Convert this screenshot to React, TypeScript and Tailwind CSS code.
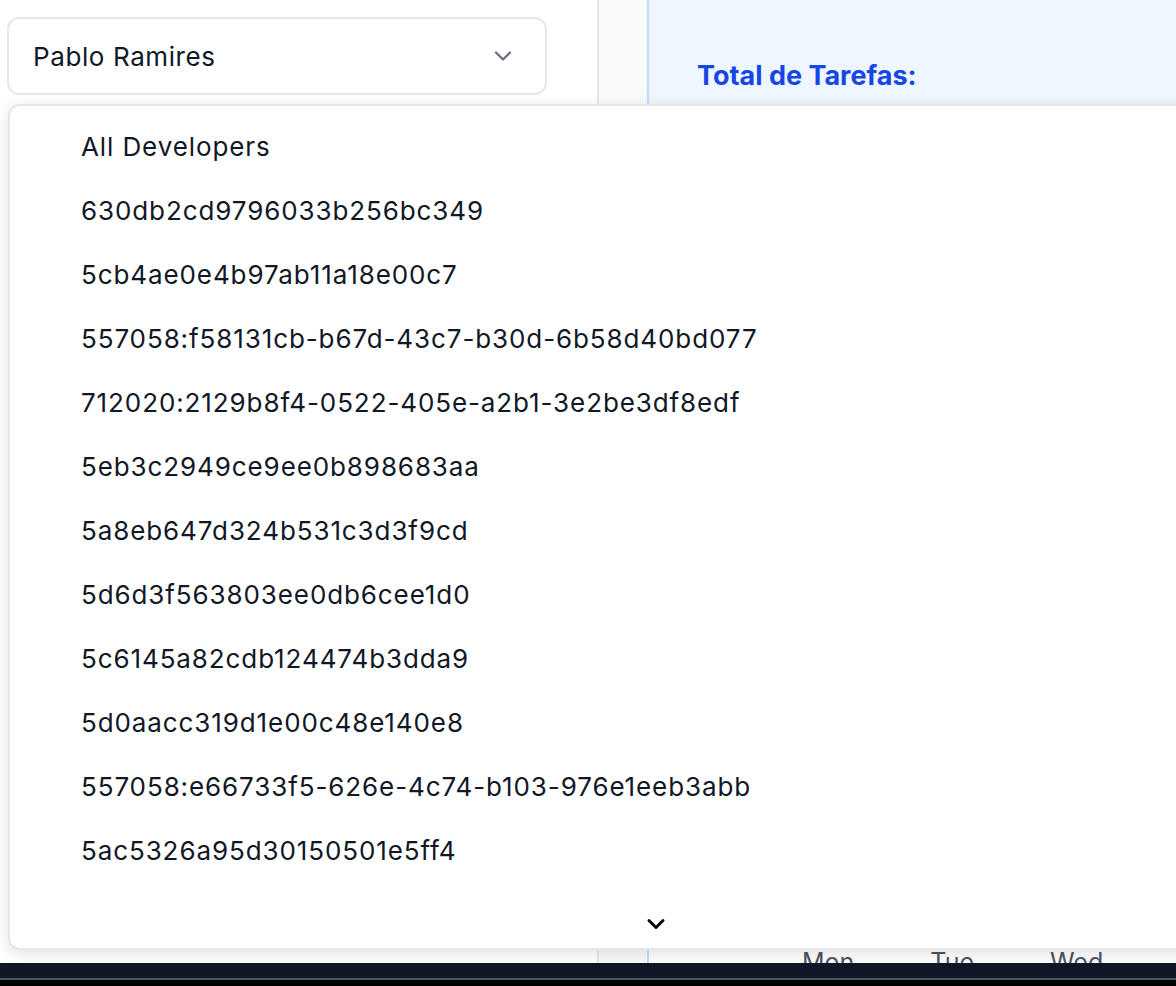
import type { FC } from "react";
import { ChevronDown } from "lucide-react";

const developers = [
  "All Developers",
  "630db2cd9796033b256bc349",
  "5cb4ae0e4b97ab11a18e00c7",
  "557058:f58131cb-b67d-43c7-b30d-6b58d40bd077",
  "712020:2129b8f4-0522-405e-a2b1-3e2be3df8edf",
  "5eb3c2949ce9ee0b898683aa",
  "5a8eb647d324b531c3d3f9cd",
  "5d6d3f563803ee0db6cee1d0",
  "5c6145a82cdb124474b3dda9",
  "5d0aacc319d1e00c48e140e8",
  "557058:e66733f5-626e-4c74-b103-976e1eeb3abb",
  "5ac5326a95d30150501e5ff4",
];

const App: FC = () => {
  return (
    <div
      className="relative h-[986px] w-[1176px] overflow-hidden bg-white flex flex-col"
      style={{ fontFamily: "Inter, 'Noto Sans', sans-serif" }}
    >
      <div className="flex flex-1 min-h-0">
        {/* left column with the select */}
        <div className="w-[597px] shrink-0 bg-white pt-[17px] pl-[7px] pr-[50px]">
          <button
            type="button"
            className="w-[540px] h-[78px] flex items-center justify-between pl-[24px] pr-[28px] border-2 border-gray-200 rounded-xl bg-white text-[26px] tracking-[0.6px] text-gray-900"
          >
            <span>Pablo Ramires</span>
            <ChevronDown className="size-[28px] text-gray-500" strokeWidth={2} />
          </button>
        </div>

        {/* thin gray gutter */}
        <div className="w-[50px] shrink-0 bg-slate-50 border-l-2 border-gray-200" />

        {/* main content */}
        <div className="flex-1 flex flex-col border-l-2 border-blue-200">
          <div className="bg-blue-50 h-[300px] pl-[48px] pt-[56px]">
            <h2 className="text-[27px] font-bold text-blue-700">Total de Tarefas:</h2>
          </div>
          <div className="flex-1 bg-white flex items-end">
            <div className="flex gap-[76px] pl-[153px] -mb-[18px] text-[25px] text-gray-600">
              <span>Mon</span>
              <span>Tue</span>
              <span>Wed</span>
            </div>
          </div>
        </div>
      </div>

      {/* dark bottom bar */}
      <div className="h-[23px] shrink-0 bg-gray-900 flex flex-col justify-end">
        <div className="h-[2px] bg-gray-600" />
        <div className="h-[6px] bg-black" />
      </div>

      {/* open dropdown */}
      <div className="absolute left-[8px] top-[104px] -right-[30px] h-[846px] bg-white border-2 border-gray-200 rounded-xl shadow-[0_4px_16px_rgba(0,0,0,0.12)] flex flex-col">
        <ul className="pt-[8px] flex flex-col">
          {developers.map((d) => (
            <li
              key={d}
              className="h-[64px] flex items-center pl-[71px] text-[26px] tracking-[0.9px] text-gray-900"
            >
              {d}
            </li>
          ))}
        </ul>
        <div className="flex-1 flex items-end justify-start pl-[632px] pb-[10px]">
          <ChevronDown className="size-[28px] text-black" strokeWidth={2.5} />
        </div>
      </div>
    </div>
  );
};

export default App;
